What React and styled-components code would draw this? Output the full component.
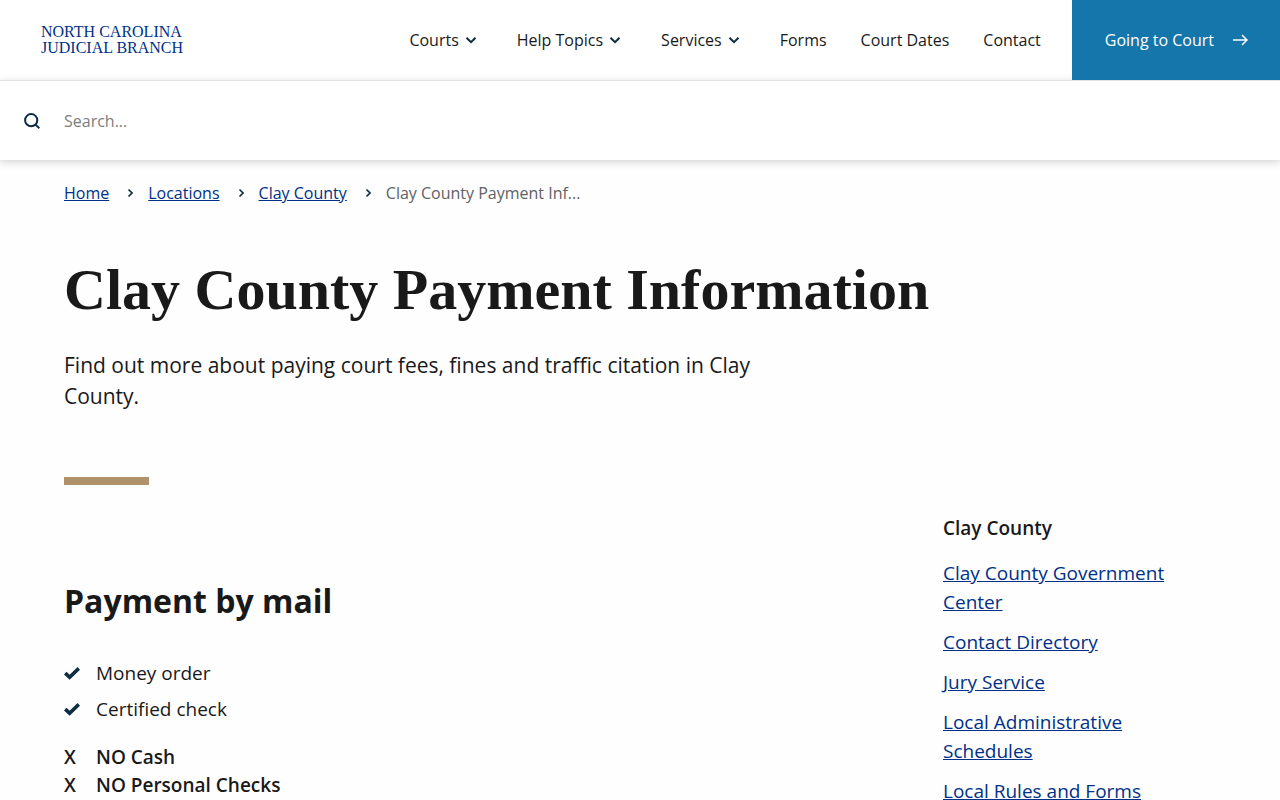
import React from "react";
import styled, { createGlobalStyle } from "styled-components";

const menu = [
  { label: "Courts", open: true },
  { label: "Help Topics", open: true },
  { label: "Services", open: true },
  { label: "Forms" },
  { label: "Court Dates" },
  { label: "Contact" },
];

const crumbs = ["Home", "Locations", "Clay County"];

const accepted = ["Money order", "Certified check"];
const refused = ["NO Cash", "NO Personal Checks"];

const sideLinks = [
  "Clay County Government Center",
  "Contact Directory",
  "Jury Service",
  "Local Administrative Schedules",
  "Local Rules and Forms",
];

export default function App() {
  return (
    <>
      <GlobalStyle />
      <Header>
        <Logo href="#">
          <span>NORTH CAROLINA</span>
          <span>JUDICIAL BRANCH</span>
        </Logo>
        <Nav aria-label="Main">
          {menu.map((item) =>
            item.open ? (
              <MenuButton key={item.label} type="button">
                {item.label}
                <svg width="24" height="24" viewBox="0 0 24 24" aria-hidden="true">
                  <path d="M7.5 9.8 12 14.2 16.5 9.8" />
                </svg>
              </MenuButton>
            ) : (
              <MenuLink key={item.label} href="#">
                {item.label}
              </MenuLink>
            )
          )}
        </Nav>
        <CourtLink href="#">
          Going to Court
          <svg width="16" height="16" viewBox="0 0 16 16" aria-hidden="true">
            <path d="M1 8h14M10 3l5 5-5 5" />
          </svg>
        </CourtLink>
      </Header>
      <SearchBar role="search">
        <SearchButton type="submit" aria-label="Search">
          <svg width="16" height="16" viewBox="0 0 16 16" aria-hidden="true">
            <circle cx="7.2" cy="7.2" r="6.1" />
            <path d="M11.6 11.6 15.3 15.3" />
          </svg>
        </SearchButton>
        <SearchInput type="text" aria-label="Search" placeholder="Search..." />
      </SearchBar>
      <Page>
        <Breadcrumb aria-label="Breadcrumb">
          {crumbs.map((crumb) => (
            <React.Fragment key={crumb}>
              <a href="#">{crumb}</a>
              <svg width="9" height="10" viewBox="0 0 9 10" aria-hidden="true">
                <path d="M4.5 1.5 8 5 4.5 8.5" />
              </svg>
            </React.Fragment>
          ))}
          <span>Clay County Payment Inf...</span>
        </Breadcrumb>
        <Title>Clay County Payment Information</Title>
        <Lead>
          Find out more about paying court fees, fines and traffic citation in
          Clay County.
        </Lead>
        <Rule />
        <Columns>
          <section>
            <Heading>Payment by mail</Heading>
            <CheckList>
              {accepted.map((text) => (
                <li key={text}>
                  <svg width="16" height="14" viewBox="0 0 16 14" aria-hidden="true">
                    <path d="M1.2 7.2 5.6 11.2 14.8 2.4" />
                  </svg>
                  {text}
                </li>
              ))}
            </CheckList>
            <CrossList>
              {refused.map((text) => (
                <li key={text}>
                  <span>X</span>
                  {text}
                </li>
              ))}
            </CrossList>
          </section>
          <Side>
            <h2>Clay County</h2>
            <ul>
              {sideLinks.map((text) => (
                <li key={text}>
                  <a href="#">{text}</a>
                </li>
              ))}
            </ul>
          </Side>
        </Columns>
      </Page>
    </>
  );
}

const GlobalStyle = createGlobalStyle`
  * {
    box-sizing: border-box;
    margin: 0;
    padding: 0;
  }
  body {
    background: #fefefe;
    color: #191919;
    font-family: "Open Sans", "Noto Sans", sans-serif;
    font-size: 16px;
    line-height: 24px;
  }
  ul {
    list-style: none;
  }
  svg {
    flex: none;
    fill: none;
    stroke: #0d2d43;
    stroke-width: 2;
  }
`;

const Header = styled.header`
  display: flex;
  align-items: center;
  height: 80px;
  padding-left: 41px;
  background: white;
`;

const Logo = styled.a`
  display: flex;
  flex-direction: column;
  margin-right: auto;
  color: #003087;
  font-family: "Liberation Serif", serif;
  font-size: 16px;
  line-height: 16px;
  text-decoration: none;
`;

const Nav = styled.nav`
  display: flex;
  gap: 34px;
  margin-right: 31px;
`;

const MenuButton = styled.button`
  display: flex;
  align-items: center;
  border: 0;
  background: none;
  color: inherit;
  font: inherit;
  cursor: pointer;
`;

const MenuLink = styled.a`
  color: inherit;
  text-decoration: none;
`;

const CourtLink = styled.a`
  position: relative;
  z-index: 1;
  display: flex;
  align-items: center;
  gap: 18px;
  height: 100%;
  padding: 0 32px 0 33px;
  background: #1476aa;
  color: white;
  text-decoration: none;
  svg {
    stroke: white;
    stroke-width: 1.5;
  }
`;

const SearchBar = styled.form`
  display: flex;
  align-items: center;
  height: 80px;
  border-top: 1px solid #e1e1e1;
  background: white;
  box-shadow: 0 2px 8px rgba(0, 0, 0, 0.18);
`;

const SearchButton = styled.button`
  display: flex;
  justify-content: center;
  width: 64px;
  border: 0;
  background: none;
  cursor: pointer;
`;

const SearchInput = styled.input`
  flex: 1;
  height: 48px;
  border: 0;
  outline: 0;
  background: none;
  font: inherit;
  &::placeholder {
    color: #7d7d7d;
  }
`;

const Page = styled.main`
  padding: 21px 64px 0;
  a {
    color: #003087;
    text-underline-offset: 1px;
  }
`;

const Breadcrumb = styled.nav`
  display: flex;
  align-items: center;
  gap: 15px;
  color: #5f6163;
  svg {
    stroke-width: 1.6;
  }
`;

const Title = styled.h1`
  margin-top: 47px;
  font-family: "Liberation Serif", serif;
  font-size: 58px;
  font-weight: 700;
  line-height: 76px;
`;

const Lead = styled.p`
  max-width: 700px;
  margin-top: 22px;
  font-size: 21px;
  line-height: 31px;
`;

const Rule = styled.div`
  width: 85px;
  height: 8px;
  margin-top: 65px;
  background: #b0926a;
`;

const Columns = styled.div`
  display: grid;
  grid-template-columns: 1fr 273px;
  gap: 32px;
`;

const Heading = styled.h2`
  margin-top: 94px;
  font-size: 32px;
  font-weight: 700;
  line-height: 44px;
`;

const CheckList = styled.ul`
  display: grid;
  gap: 8px;
  margin-top: 36px;
  font-size: 19px;
  line-height: 28px;
  li {
    display: flex;
    align-items: center;
    gap: 16px;
  }
  svg {
    stroke-width: 3.6;
  }
`;

const CrossList = styled.ul`
  margin-top: 20px;
  font-size: 19px;
  font-weight: 600;
  line-height: 28px;
  li {
    display: flex;
  }
  span {
    width: 32px;
  }
`;

const Side = styled.aside`
  margin-top: 29px;
  font-size: 19px;
  line-height: 29px;
  h2 {
    font-size: 19px;
    font-weight: 600;
  }
  ul {
    display: grid;
    gap: 11px;
    margin-top: 16px;
  }
`;
